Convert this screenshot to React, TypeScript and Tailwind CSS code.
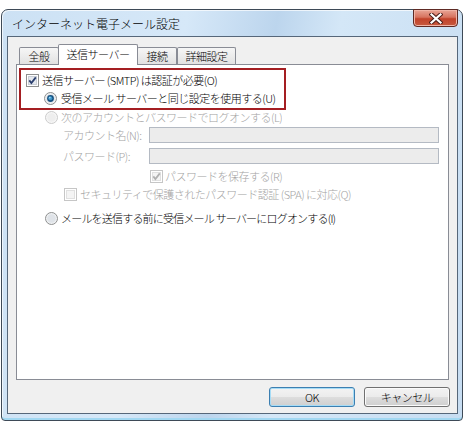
import React from "react";

function CheckBox({ checked = false, disabled = false }: { checked?: boolean; disabled?: boolean }) {
  const edge = disabled ? "#c6c6c6" : "#8e8f8f";
  const fill = disabled ? "#f4f4f4" : "#e4e8ee";
  const mark = disabled ? "#b0b0b0" : "#2a3e6e";
  return (
    <svg width="13" height="13" viewBox="0 0 13 13" className="shrink-0">
      <rect x="0.5" y="0.5" width="12" height="12" fill="#fff" stroke={edge} />
      <rect x="2.5" y="2.5" width="8" height="8" fill={fill} stroke={disabled ? "#e0e0e0" : "#c9ced6"} />
      {checked && <path d="M3.3 6.4 L5.4 9 L9.8 3.4" fill="none" stroke={mark} strokeWidth="1.8" />}
    </svg>
  );
}

function Radio({ selected = false, disabled = false }: { selected?: boolean; disabled?: boolean }) {
  return (
    <svg width="13" height="13" viewBox="0 0 13 13" className="shrink-0">
      <circle cx="6.5" cy="6.5" r="6" fill={disabled ? "#f6f6f6" : "#eef0f2"} stroke={disabled ? "#cbcbcb" : "#8e8f8f"} />
      <circle cx="6.5" cy="6.5" r="4.3" fill={disabled ? "#eeeeee" : "#dfe3e8"} />
      {selected && (
        <>
          <circle cx="6.5" cy="6.5" r="3.4" fill="#16507f" />
          <circle cx="6.3" cy="6.2" r="2" fill="#3d95c9" />
          <circle cx="5.8" cy="5.6" r="0.9" fill="#9bd6f3" />
        </>
      )}
    </svg>
  );
}

function Tab({ label, active = false, className = "" }: { label: string; active?: boolean; className?: string }) {
  return active ? (
    <div className={`relative z-10 h-[21px] -mb-[1px] flex items-center justify-center pb-[2px] border border-b-0 border-[#898c95] bg-white rounded-t-[2px] ${className}`}>
      {label}
    </div>
  ) : (
    <div className={`h-[17px] flex items-center justify-center border border-b-0 border-[#898c95] bg-gradient-to-b from-[#f6f6f6] to-[#e2e2e2] rounded-t-[2px] ${className}`}>
      {label}
    </div>
  );
}

function Button({ label, isDefault = false }: { label: string; isDefault?: boolean }) {
  return (
    <div
      className={`w-[86px] h-[20px] flex items-center justify-center rounded-[3px] border ${
        isDefault ? "border-[#3c7fb1] shadow-[inset_0_0_0_1px_#a6dcf6]" : "border-[#707070] shadow-[inset_0_0_0_1px_#fbfbfb]"
      } bg-[linear-gradient(#f3f3f3_0%,#ebebeb_50%,#dddddd_51%,#cfcfcf_100%)]`}
    >
      {label}
    </div>
  );
}

export default function App() {
  return (
    <div className="w-[464px] h-[440px] bg-white pt-[9px] pl-[1px] text-[11px] font-light text-black tracking-[-0.5px] font-[family-name:'Noto_Sans_CJK_JP','Noto_Sans',sans-serif]">
      <div className="w-[462px] h-[412px] flex flex-col rounded-t-[7px] rounded-b-[4px] border border-[#3e4a57] pl-[5px] pr-[4px] pb-[6px] bg-[linear-gradient(100deg,#cce1f4_0%,#d6e8f8_35%,#bcd5ed_52%,#d4e7f7_64%,#c7ddf2_100%)] shadow-[inset_0_-2px_0_#a2d8f2,inset_1px_1px_0_#ffffffb0]">
        {/* title bar */}
        <div className="h-[26px] flex items-start justify-between">
          <span className="mt-[6px] ml-[5px] text-[12px] leading-[16px] tracking-normal">インターネット電子メール設定</span>
          <div className="w-[45px] h-[18px] -mt-[1px] flex items-center justify-center rounded-b-[4px] border border-[#5e2a24] bg-[linear-gradient(#e9a596_0%,#d7735f_45%,#c2432b_55%,#c75a3f_100%)] shadow-[inset_0_0_0_1px_#f0b4a6]">
            <svg width="14" height="11" viewBox="0 0 14 11">
              <path d="M2.5 1.5 L11.5 9.5 M11.5 1.5 L2.5 9.5" stroke="#4a1d18" strokeWidth="4.2" strokeLinecap="square" />
              <path d="M2.5 1.5 L11.5 9.5 M11.5 1.5 L2.5 9.5" stroke="#ffffff" strokeWidth="2.2" strokeLinecap="square" />
            </svg>
          </div>
        </div>

        {/* client area */}
        <div className="flex-1 flex flex-col border border-[#56677a] bg-[#f0f0f0] pt-[7px]">
          <div className="mx-[8px] h-[20px] flex items-end pl-[3px]">
            <Tab label="全般" className="w-[40px]" />
            <Tab label="送信サーバー" active className="w-[80px] -ml-[1px]" />
            <Tab label="接続" className="w-[40px] -ml-[1px]" />
            <Tab label="詳細設定" className="w-[59px]" />
          </div>

          <div className="mx-[8px] h-[316px] flex flex-col border border-[#898c95] bg-white">
            <div className="ml-[2px] mt-[3px] w-[267px] h-[42px] flex flex-col border-2 border-[#a41e22]">
              <div className="mt-[4px] ml-[5px] h-[13px] flex items-center gap-[3px]">
                <CheckBox checked />
                <span className="leading-[13px]">送信サーバー (SMTP) は認証が必要(O)</span>
              </div>
              <div className="mt-[5px] ml-[23px] h-[13px] flex items-center gap-[4px]">
                <Radio selected />
                <span className="leading-[13px]">受信メール サーバーと同じ設定を使用する(U)</span>
              </div>
            </div>

            <div className="mt-[1px] ml-[28px] h-[13px] flex items-center gap-[3px] text-[#a3a3a3]">
              <Radio disabled />
              <span className="h-[11px] self-end overflow-hidden">
                <span className="block -mt-[2px] leading-[13px]">次のアカウントとパスワードでログオンする(L)</span>
              </span>
            </div>

            <div className="mt-[3px] h-[16px] flex items-center text-[#a3a3a3]">
              <span className="ml-[46px] w-[86px] leading-[16px]">アカウント名(N):</span>
              <div className="w-[290px] h-[16px] border border-[#b4bac3] bg-[#ececec]" />
            </div>
            <div className="mt-[5px] h-[16px] flex items-center text-[#a3a3a3]">
              <span className="ml-[46px] w-[86px] leading-[16px]">パスワード(P):</span>
              <div className="w-[290px] h-[16px] border border-[#b4bac3] bg-[#ececec]" />
            </div>

            <div className="mt-[6px] ml-[133px] h-[13px] flex items-center gap-[2px] text-[#a3a3a3]">
              <CheckBox checked disabled />
              <span className="leading-[13px]">パスワードを保存する(R)</span>
            </div>
            <div className="mt-[5px] ml-[47px] h-[13px] flex items-center gap-[3px] text-[#a3a3a3]">
              <CheckBox disabled />
              <span className="leading-[13px]">セキュリティで保護されたパスワード認証 (SPA) に対応(Q)</span>
            </div>

            <div className="mt-[11px] ml-[28px] h-[13px] flex items-center gap-[3px]">
              <Radio />
              <span className="leading-[13px] tracking-[-0.8px]">メールを送信する前に受信メール サーバーにログオンする(I)</span>
            </div>
          </div>

          <div className="mt-[7px] pr-[7px] flex justify-end gap-[9px]">
            <Button label="OK" isDefault />
            <Button label="キャンセル" />
          </div>
        </div>
      </div>
    </div>
  );
}
